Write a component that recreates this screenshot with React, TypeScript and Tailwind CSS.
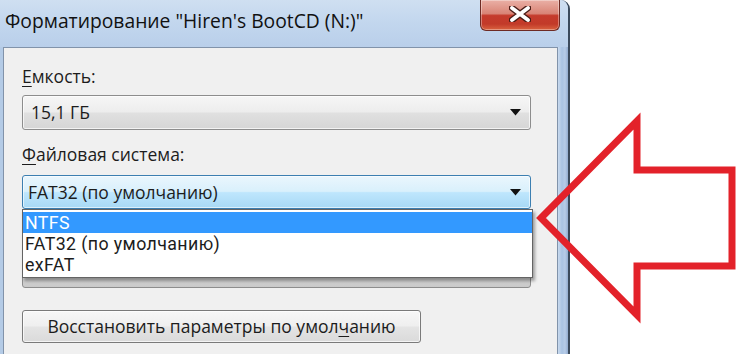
import React from "react";

const Caret = () => (
  <svg width="11" height="7" viewBox="0 0 11 7" className="shrink-0">
    <polygon points="0,0 11,0 5.5,6.5" fill="#111" />
  </svg>
);

export default function App() {
  return (
    <div className="relative w-[750px] h-[354px] overflow-hidden bg-white font-['Open_Sans',sans-serif] text-[17.5px] text-[#1c1c1c]">
      <div className="flex flex-col w-[570px] h-full rounded-tr-[9px] border-r-2 border-[#3b4a5c] overflow-hidden bg-[#bcd2ec]">
        {/* Title bar */}
        <div className="flex items-start justify-between h-[47px] shrink-0 bg-[linear-gradient(to_bottom,#cfdff1,#c3d7ee_45%,#b9cfea)]">
          <div className="pl-[5px] pt-[8px] text-[19.3px] leading-[25px] text-[#111] whitespace-nowrap">
            Форматирование "Hiren's BootCD (N:)"
          </div>
          <div className="mr-[8px] w-[80px] h-[31px] rounded-b-[6px] border border-t-0 border-[#6e2b24] bg-[linear-gradient(to_bottom,#eab0a6_0%,#d98476_45%,#c53b2c_52%,#c23a29_80%,#d9633f_100%)] flex items-start justify-center pt-[6px] shadow-[inset_0_0_0_1px_rgba(255,255,255,0.35)]">
            <svg width="22" height="16" viewBox="0 0 22 16">
              <path d="M3 2 L19 14 M19 2 L3 14" stroke="#4a1d17" strokeWidth="6.5" strokeLinecap="round" />
              <path d="M3 2 L19 14 M19 2 L3 14" stroke="#ffffff" strokeWidth="3.8" strokeLinecap="round" />
            </svg>
          </div>
        </div>

        {/* Body */}
        <div className="flex flex-1">
          <div className="w-[3px] bg-[#b4cbe6]" />
          <div className="flex-1 flex flex-col border-t border-l border-r border-[#8193aa] bg-[#f0f0f0] pl-[18px]">
            <div className="mt-[17px] h-[22px] leading-[22px]">
              <span className="underline underline-offset-[3px]">Е</span>мкость:
            </div>
            <div className="mt-[8px] h-[35px] w-[509px] flex items-center justify-between pl-[8px] pr-[9px] rounded-[3px] border border-[#8d8d8d] bg-[linear-gradient(to_bottom,#f6f6f6_0%,#ededed_48%,#e0e0e0_52%,#d6d6d6_100%)] shadow-[inset_0_0_0_1px_rgba(255,255,255,0.7)]">
              <span>15,1 ГБ</span>
              <Caret />
            </div>
            <div className="mt-[13px] h-[22px] leading-[22px]">
              <span className="underline underline-offset-[3px]">Ф</span>айловая система:
            </div>
            <div className="relative mt-[10px] h-[34px] w-[509px] z-10">
              <div className="h-full flex items-center justify-between pl-[5px] pr-[9px] rounded-[3px] border border-[#3c7fb1] bg-[linear-gradient(to_bottom,#eaf6fd_0%,#d9f0fc_48%,#bee6fd_52%,#a7d9f5_100%)] shadow-[inset_0_0_0_1px_rgba(255,255,255,0.6)]">
                <span>FAT32 (по умолчанию)</span>
                <Caret />
              </div>
              <div className="absolute left-0 top-full w-[511px] border border-[#646464] bg-white py-[2px] shadow-[2px_3px_3px_rgba(0,0,0,0.35)] font-['Roboto',sans-serif] text-[17.8px] tracking-[0.4px]">
                <div className="h-[21px] leading-[21px] pl-[2px] bg-[#3399ff] text-white">NTFS</div>
                <div className="h-[21px] leading-[21px] pl-[2px]">FAT32 (по умолчанию)</div>
                <div className="h-[21px] leading-[21px] pl-[2px]">exFAT</div>
              </div>
            </div>
            <div className="mt-[10px] h-[22px]" />
            <div className="mt-[13px] h-[34px] w-[509px] rounded-[3px] border border-[#8d8d8d] bg-[linear-gradient(to_bottom,#f6f6f6_0%,#ededed_48%,#dcdcdc_52%,#c9c9c9_100%)]" />
            <div className="mt-[22px] h-[33px] w-[399px] flex items-center justify-center rounded-[3px] border border-[#7a7a7a] bg-[linear-gradient(to_bottom,#f7f7f7_0%,#efefef_48%,#e4e4e4_52%,#dadada_100%)] shadow-[inset_0_0_0_1px_rgba(255,255,255,0.7)]">
              <span>
                Восстановить параметры по умол<span className="underline underline-offset-[3px]">ч</span>анию
              </span>
            </div>
          </div>
          <div className="w-[10px] bg-[linear-gradient(to_right,#c9daee,#a9c3e3_40%,#b7cce8_70%,#92acd0)]" />
        </div>
      </div>

      {/* Red arrow overlay */}
      <svg className="absolute inset-0 pointer-events-none" width="750" height="354" viewBox="0 0 750 354">
        <polygon
          points="541,218 637,121 637,170 732,170 732,266 637,266 637,315"
          fill="none"
          stroke="#e3222a"
          strokeWidth="7"
          strokeLinejoin="miter"
        />
      </svg>
    </div>
  );
}
